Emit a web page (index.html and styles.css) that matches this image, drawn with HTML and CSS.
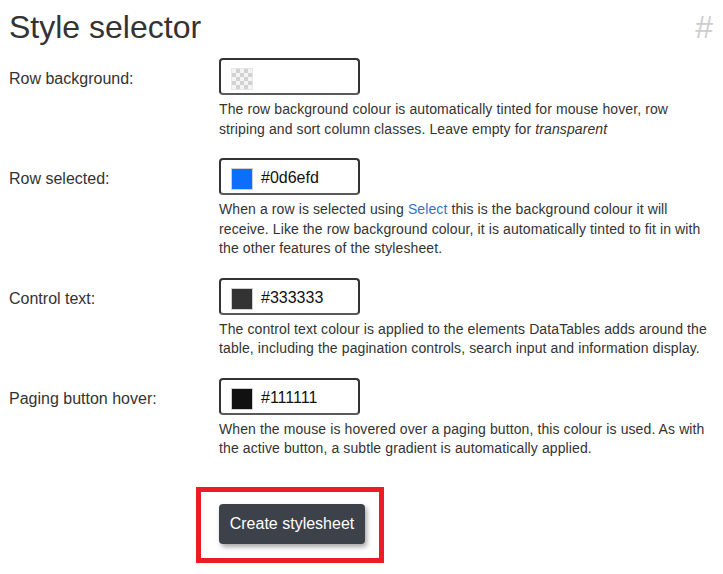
FILE: index.html
```html
<!DOCTYPE html>
<html lang="en">
<head>
<meta charset="utf-8">
<title>Style selector</title>
<link rel="stylesheet" href="styles.css">
</head>
<body>
<div class="page">
  <div class="heading">
    <h1 class="title">Style selector</h1>
    <a class="anchor" href="#">#</a>
  </div>

  <div class="form">
    <div class="row">
      <label class="label">Row background:</label>
      <div class="control">
        <div class="picker">
          <span class="swatch swatch-empty"></span>
          <span class="value"></span>
        </div>
        <p class="desc">The row background colour is automatically tinted for mouse hover, row striping and sort column classes. Leave empty for <em>transparent</em></p>
      </div>
    </div>

    <div class="row">
      <label class="label">Row selected:</label>
      <div class="control">
        <div class="picker">
          <span class="swatch swatch-blue"></span>
          <span class="value">#0d6efd</span>
        </div>
        <p class="desc">When a row is selected using <a class="link" href="#">Select</a> this is the background colour it will receive. Like the row background colour, it is automatically tinted to fit in with the other features of the stylesheet.</p>
      </div>
    </div>

    <div class="row">
      <label class="label">Control text:</label>
      <div class="control">
        <div class="picker">
          <span class="swatch swatch-333"></span>
          <span class="value">#333333</span>
        </div>
        <p class="desc">The control text colour is applied to the elements DataTables adds around the table, including the pagination controls, search input and information display.</p>
      </div>
    </div>

    <div class="row">
      <label class="label">Paging button hover:</label>
      <div class="control">
        <div class="picker">
          <span class="swatch swatch-111"></span>
          <span class="value">#111111</span>
        </div>
        <p class="desc">When the mouse is hovered over a paging button, this colour is used. As with the active button, a subtle gradient is automatically applied.</p>
      </div>
    </div>
  </div>

  <div class="actions">
    <div class="highlight">
      <button class="btn" type="button">Create stylesheet</button>
    </div>
  </div>
</div>
</body>
</html>
```

FILE: styles.css
```css
* { box-sizing: border-box; }

html, body {
  margin: 0;
  padding: 0;
  background: #ffffff;
}

body {
  font-family: "Liberation Sans", Arial, sans-serif;
  color: #333333;
}

.page {
  padding: 7px 10px 0 9px;
}

.heading {
  display: flex;
  justify-content: space-between;
  align-items: flex-start;
}

.title {
  margin: 0;
  font-size: 32px;
  line-height: 40px;
  font-weight: normal;
  color: #333333;
}

.anchor {
  font-size: 32px;
  line-height: 40px;
  color: #cccccc;
  text-decoration: none;
}

.form {
  margin-top: 11px;
}

.row {
  display: grid;
  grid-template-columns: 210px 1fr;
  margin-bottom: 19px;
}

.label {
  font-size: 16px;
  line-height: 37px;
  padding-top: 2px;
  color: #333333;
}

.picker {
  width: 141px;
  height: 37px;
  border: 2px solid #333333;
  border-bottom-color: #5a5a5a;
  border-radius: 4px;
  display: flex;
  align-items: flex-start;
  padding: 9px 0 0 10px;
  gap: 8px;
}

.swatch {
  width: 22px;
  height: 22px;
  margin-top: -1px;
  border: 1px solid #cfcfcf;
  flex: none;
}

.swatch-empty {
  border-color: #e6e6e6;
  background-color: #f4f4f4;
  background-image:
    linear-gradient(45deg, #d2d2d2 25%, transparent 25%, transparent 75%, #d2d2d2 75%),
    linear-gradient(45deg, #d2d2d2 25%, transparent 25%, transparent 75%, #d2d2d2 75%);
  background-size: 8px 8px;
  background-position: 0 0, 4px 4px;
}

.swatch-blue { background: #0d6efd; }
.swatch-333 { background: #333333; }
.swatch-111 { background: #111111; }

.value {
  font-size: 16px;
  line-height: 18px;
  color: #111111;
}

.desc {
  margin: 5px 0 0 0;
  font-size: 14px;
  line-height: 19.5px;
  letter-spacing: 0.1px;
  color: #333333;
}

.desc em {
  font-style: italic;
}

.link {
  color: #3174c7;
  text-decoration: none;
}

.actions {
  padding-left: 187px;
  margin-top: 28px;
}

.highlight {
  display: inline-block;
  border: 5px solid #ed1c24;
  padding: 12px 14px 14px 18px;
}

.btn {
  display: block;
  height: 40px;
  width: 146px;
  padding: 0;
  border: none;
  border-radius: 4px;
  background: #3d4149;
  color: #ffffff;
  font-family: "Liberation Sans", Arial, sans-serif;
  font-size: 16px;
  box-shadow: 2px 3px 5px rgba(0, 0, 0, 0.35);
  cursor: pointer;
}
```
